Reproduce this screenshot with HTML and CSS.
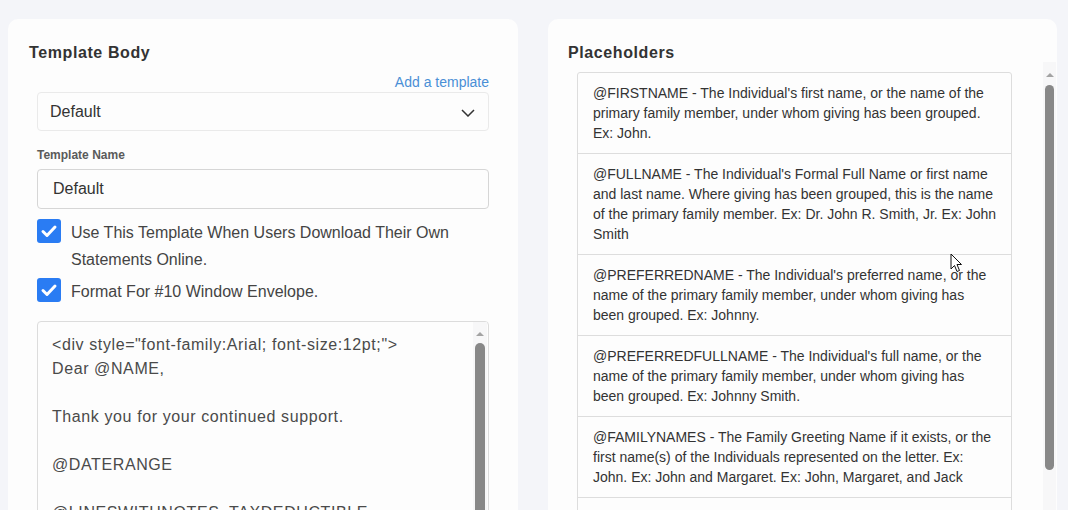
FILE: index.html
```html
<!DOCTYPE html>
<html lang="en">
<head>
<meta charset="utf-8">
<title>Template Body</title>
<link rel="stylesheet" href="styles.css">
</head>
<body>
<div class="page">
  <section class="card card-left">
    <h2 class="card-title">Template Body</h2>
    <div class="form">
      <div class="link-row"><a class="add-link" href="#">Add a template</a></div>
      <div class="select">
        <span class="select-value">Default</span>
        <svg class="chev" width="14" height="8" viewBox="0 0 14 8"><path d="M1 1 L7 7 L13 1" fill="none" stroke="#333" stroke-width="1.5"/></svg>
      </div>
      <div class="field-label">Template Name</div>
      <div class="input">Default</div>
      <div class="check-row first">
        <span class="checkbox"><svg width="24" height="24" viewBox="0 0 24 24"><path d="M6 12.5 L10 16.5 L18 8" fill="none" stroke="#fff" stroke-width="3" stroke-linecap="round" stroke-linejoin="round"/></svg></span>
        <span class="check-label">Use This Template When Users Download Their Own Statements Online.</span>
      </div>
      <div class="check-row second">
        <span class="checkbox"><svg width="24" height="24" viewBox="0 0 24 24"><path d="M6 12.5 L10 16.5 L18 8" fill="none" stroke="#fff" stroke-width="3" stroke-linecap="round" stroke-linejoin="round"/></svg></span>
        <span class="check-label">Format For #10 Window Envelope.</span>
      </div>
      <div class="editor">
        <div class="editor-text">&lt;div style="font-family:Arial; font-size:12pt;"&gt;
Dear @NAME,

Thank you for your continued support.

@DATERANGE

@LINESWITHNOTES_TAXDEDUCTIBLE

Sincerely,</div>
        <div class="vbar vbar-editor">
          <span class="arrow"></span>
          <span class="thumb"></span>
        </div>
      </div>
    </div>
  </section>

  <section class="card card-right">
    <h2 class="card-title">Placeholders</h2>
    <div class="ph-scroll">
      <div class="ph-content">
        <ul class="ph-list">
          <li>@FIRSTNAME - The Individual's first name, or the name of the primary family member, under whom giving has been grouped. Ex: John.</li>
          <li>@FULLNAME - The Individual's Formal Full Name or first name and last name. Where giving has been grouped, this is the name of the primary family member. Ex: Dr. John R. Smith, Jr. Ex: John Smith</li>
          <li>@PREFERREDNAME - The Individual's preferred name, or the name of the primary family member, under whom giving has been grouped. Ex: Johnny.</li>
          <li>@PREFERREDFULLNAME - The Individual's full name, or the name of the primary family member, under whom giving has been grouped. Ex: Johnny Smith.</li>
          <li>@FAMILYNAMES - The Family Greeting Name if it exists, or the first name(s) of the Individuals represented on the letter. Ex: John. Ex: John and Margaret. Ex: John, Margaret, and Jack</li>
          <li>@LASTNAME - The Individual's last name. Ex: Smith.</li>
        </ul>
      </div>
      <div class="vbar vbar-ph">
        <span class="arrow"></span>
        <span class="thumb"></span>
      </div>
    </div>
  </section>
</div>
<svg class="cursor" width="14" height="20" viewBox="0 0 14 20"><path d="M1 1 L1 16 L4.5 12.5 L7 18.5 L9.5 17.5 L7 11.5 L11.5 11.5 Z" fill="#fff" stroke="#111" stroke-width="1" stroke-linejoin="miter"/></svg>
</body>
</html>
```
FILE: styles.css
```css
html, body {
  margin: 0;
  padding: 0;
  height: 100%;
  overflow: hidden;
}
body {
  background: #f4f5f9;
  font-family: "Liberation Sans", Arial, sans-serif;
  color: #333;
}
.page {
  display: grid;
  grid-template-columns: 510px 509px;
  column-gap: 30px;
  padding: 19px 11px 0 8px;
  align-items: start;
}
.card {
  background: #fdfdfd;
  border-radius: 10px;
  height: 560px;
  box-sizing: border-box;
}
.card-left {
  padding: 24px 0 0 21px;
}
.card-right {
  padding: 24px 1px 0 20px;
}
.card-title {
  margin: 0;
  font-size: 16px;
  line-height: 19px;
  font-weight: bold;
  letter-spacing: 0.6px;
  color: #333;
}
.form {
  width: 452px;
  margin-left: 8px;
}
.link-row {
  margin-top: 10px;
  text-align: right;
  line-height: 20px;
  height: 20px;
}
.add-link {
  font-size: 14px;
  color: #4a8fd6;
  text-decoration: none;
}
.select {
  height: 39px;
  box-sizing: border-box;
  border: 1px solid #eaeaea;
  border-radius: 4px;
  display: flex;
  align-items: center;
  justify-content: space-between;
  padding: 0 13px 0 12px;
  font-size: 16px;
  color: #333;
}
.chev {
  margin-top: 3px;
}
.field-label {
  margin-top: 17px;
  font-size: 12px;
  line-height: 14px;
  font-weight: bold;
  color: #5a5a5a;
}
.input {
  margin-top: 7px;
  height: 40px;
  box-sizing: border-box;
  border: 1px solid #d6d6d6;
  border-radius: 4px;
  padding: 0 15px;
  display: flex;
  align-items: center;
  font-size: 16px;
  color: #333;
}
.check-row {
  display: flex;
  align-items: flex-start;
  gap: 10px;
  font-size: 16px;
  line-height: 27px;
  color: #444;
}
.check-row.first {
  margin-top: 10px;
}
.check-row.second {
  margin-top: 5px;
}
.checkbox {
  flex: 0 0 24px;
  width: 24px;
  height: 24px;
  background: #2a7cf3;
  border-radius: 3px;
  display: block;
}
.checkbox svg {
  display: block;
}
.editor {
  margin-top: 16px;
  height: 300px;
  box-sizing: border-box;
  border: 1px solid #dcdcdc;
  border-radius: 4px;
  display: flex;
}
.editor-text {
  flex: 1;
  padding: 11px 14px;
  font-size: 16px;
  line-height: 24px;
  letter-spacing: 0.6px;
  color: #4a4a4a;
  white-space: pre-line;
}
.vbar {
  display: flex;
  flex-direction: column;
  align-items: center;
  background: #f7f7f8;
}
.vbar .arrow {
  width: 0;
  height: 0;
  border-left: 4px solid transparent;
  border-right: 4px solid transparent;
  border-bottom: 4px solid #a3a3a3;
}
.vbar .thumb {
  display: block;
  background: #888;
  border-radius: 5px;
}
.vbar-editor {
  width: 14px;
  margin-right: 1px;
  padding-top: 10px;
}
.vbar-editor .thumb {
  width: 10px;
  height: 400px;
  margin-top: 7px;
}
.ph-scroll {
  display: flex;
  height: 500px;
}
.ph-content {
  flex: 1;
  padding: 10px 0 0 9px;
}
.ph-list {
  list-style: none;
  margin: 0;
  padding: 0;
  width: 435px;
  box-sizing: border-box;
  border: 1px solid #dddddd;
  border-radius: 3px;
}
.ph-list li {
  padding: 10px 13px 10px 15px;
  font-size: 14px;
  line-height: 20px;
  color: #333;
  border-bottom: 1px solid #dddddd;
}
.ph-list li:last-child {
  border-bottom: none;
}
.vbar-ph {
  width: 13px;
  padding-top: 11px;
}
.vbar-ph .thumb {
  width: 9px;
  height: 385px;
  margin-top: 8px;
}
.cursor {
  position: absolute;
  left: 950px;
  top: 253px;
}
```
